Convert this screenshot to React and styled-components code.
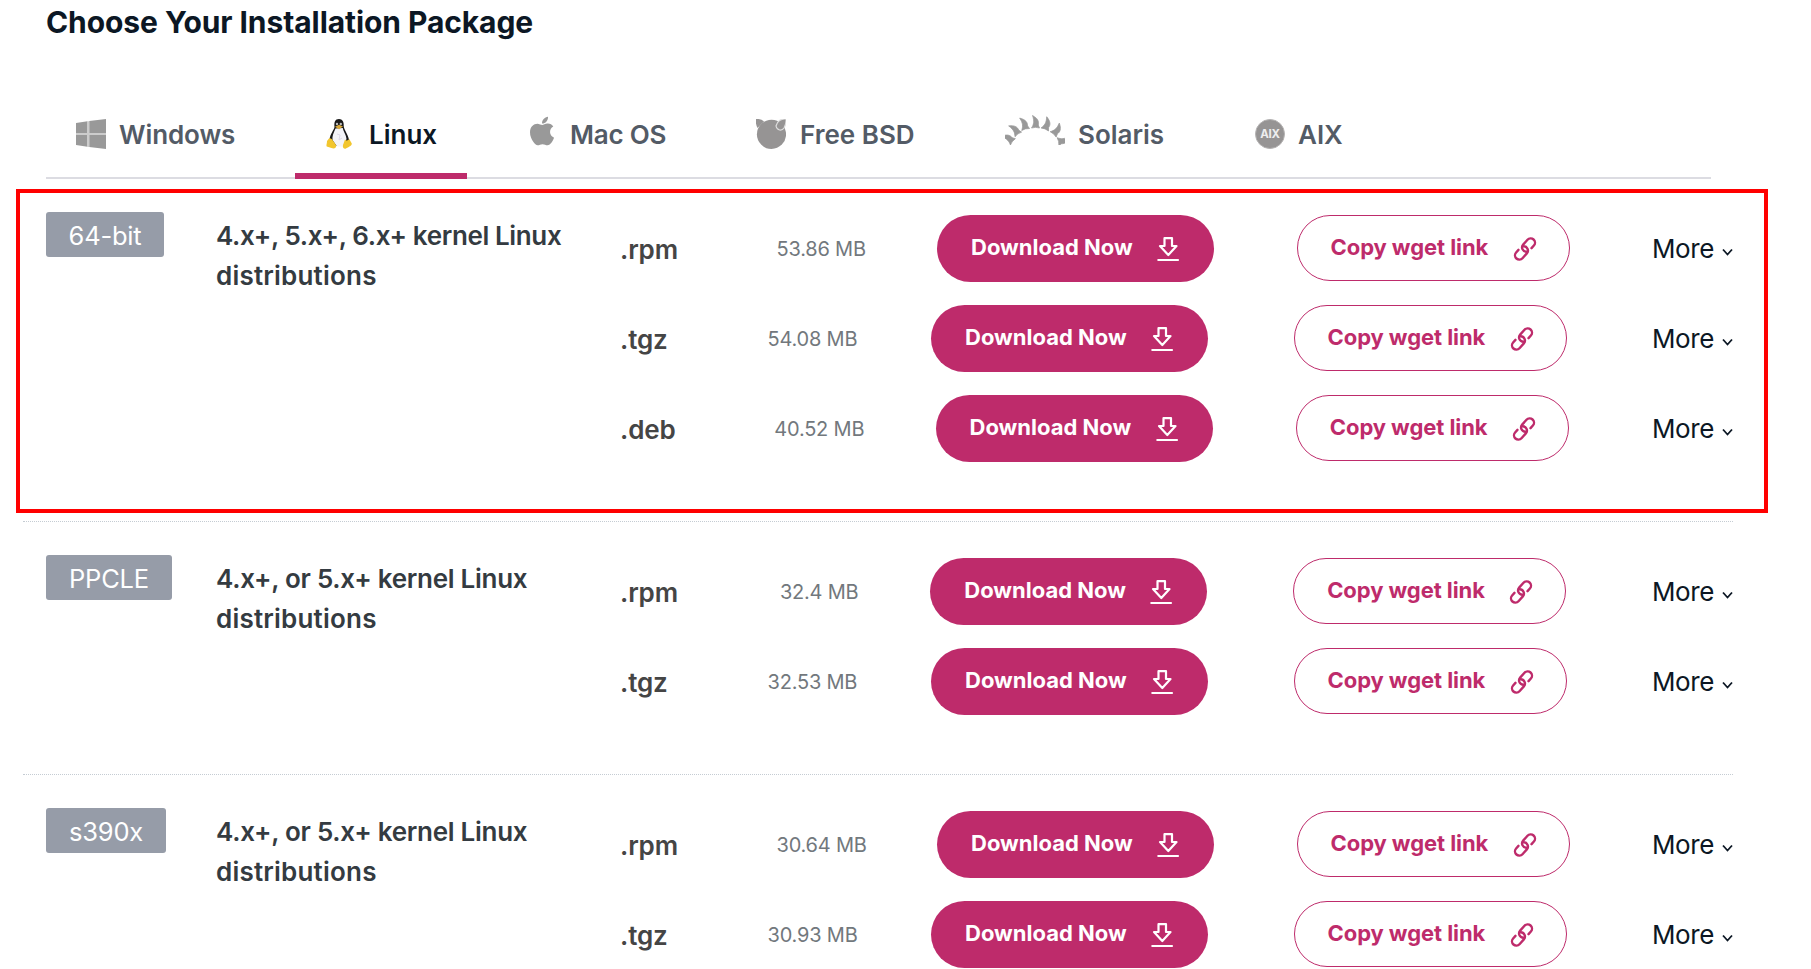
import React from "react";
import styled, { createGlobalStyle } from "styled-components";
import { FaApple } from "react-icons/fa";

const GlobalStyle = createGlobalStyle`
  * { box-sizing: border-box; }
  html, body { margin: 0; background: #fff; }
  body { font-family: Inter, "Liberation Sans", sans-serif; overflow: hidden; }
`;

const Page = styled.main`
  position: relative;
  width: 1811px;
  height: 969px;
  overflow: hidden;
  background: #fff;
`;

const Title = styled.h1`
  margin: 0;
  padding-left: 46px;
  height: 84px;
  font-size: 30px;
  line-height: 44px;
  font-weight: 700;
  letter-spacing: -0.08px;
  color: #0c1724;
  white-space: nowrap;
`;

const Tabs = styled.nav`
  display: flex;
  width: 1665px;
  height: 95px;
  margin-left: 46px;
  border-bottom: 2px solid #dcdce2;
`;

const Tab = styled.button`
  display: flex;
  align-items: flex-start;
  flex: none;
  width: ${(p) => p.$width}px;
  height: 95px;
  padding: 30px 0 0 30px;
  margin-right: ${(p) => p.$gap}px;
  border: 0;
  border-bottom: ${(p) => (p.$active ? "6px solid #be2b6b" : "0")};
  background: none;
  font: 600 26px/42px Inter, "Liberation Sans", sans-serif;
  letter-spacing: ${(p) => p.$track || 0}px;
  color: ${(p) => (p.$active ? "#0c1724" : "#535b66")};
  white-space: nowrap;
`;

const TabIcon = styled.span`
  display: flex;
  flex: none;
  margin: ${(p) => p.$top || 5}px ${(p) => p.$right || 13}px 0 ${(p) => p.$left || 0}px;
`;

const Group = styled.section`
  display: flex;
  width: 1710px;
  height: ${(p) => p.$height}px;
  margin-left: 23px;
  padding: 33px 0 0 23px;
  border-bottom: 1px dotted #c5ccd3;
`;

const BadgeCell = styled.div`
  width: 170px;
  flex: none;
`;

const Badge = styled.span`
  display: block;
  width: ${(p) => p.$width}px;
  height: 45px;
  border-radius: 3px;
  background: #969ca8;
  color: #fff;
  font-size: 25.5px;
  line-height: 48px;
  text-align: center;
  letter-spacing: -0.2px;
`;

const Description = styled.p`
  width: 404px;
  flex: none;
  margin: 4px 0 0;
  font-size: 26px;
  font-weight: 600;
  line-height: 40px;
  color: #343b41;
`;

const Line = styled.span`
  display: block;
  letter-spacing: ${(p) => p.$track}px;
`;

const Files = styled.div`
  width: 1113px;
  flex: none;
  padding-top: 3px;
`;

const FileRow = styled.div`
  display: flex;
  justify-content: space-between;
  height: 90px;
  white-space: nowrap;
`;

const Ext = styled.span`
  width: ${(p) => p.$width + 29}px;
  font-size: 26px;
  font-weight: 600;
  line-height: 70px;
  letter-spacing: -0.15px;
  color: #454545;
`;

const Size = styled.span`
  width: ${(p) => p.$width + 1.5}px;
  font-size: 20px;
  line-height: 68px;
  letter-spacing: -0.2px;
  color: #72787d;
`;

const Button = styled.button`
  display: flex;
  align-items: flex-start;
  flex: none;
  height: 67px;
  width: 277px;
  padding: 0 0 0 33px;
  border: 0;
  border-radius: 34px;
  background: #be2b6b;
  color: #fff;
  font: 700 22px/65px Inter, "Liberation Sans", sans-serif;
  letter-spacing: 0;
  white-space: nowrap;
  svg { flex: none; margin: 21px 0 0 auto; }
`;

const DownloadButton = styled(Button)`
  padding: 0 34px;
`;

const CopyButton = styled(Button)`
  width: 273px;
  height: 66px;
  margin: 0 12px 0 12px;
  padding: 0 32px 0 33px;
  border: 1px solid #be2b6b;
  background: #fff;
  color: #be2b6b;
  line-height: 62px;
  letter-spacing: -0.07px;
`;

const More = styled.span`
  display: flex;
  flex: none;
  width: 81px;
  font-size: 26px;
  line-height: 67px;
  letter-spacing: -0.4px;
  color: #0c1724;
  svg { margin: 33px 0 0 auto; }
`;

const Highlight = styled.div`
  position: absolute;
  left: 16px;
  top: 189px;
  width: 1752px;
  height: 324px;
  border: 4px solid #ff0000;
  pointer-events: none;
`;

const AixMark = styled.span`
  display: grid;
  place-items: center;
  width: 30px;
  height: 30px;
  border: 1px solid #b5b3b3;
  border-radius: 50%;
  background: #969494;
  color: #eee;
  font-size: 11.5px;
  font-weight: 700;
  line-height: 28px;
  letter-spacing: -0.2px;
`;

const WindowsIcon = () => (
  <svg width="30" height="30" viewBox="0 0 30 30" fill="#999">
    <path d="M0 4 11.5 2.3V14H0ZM13.2 2 30 0V14H13.2ZM0 16H11.5V27.8L0 26ZM13.2 16H30V30L13.2 28Z" />
    <path d="M11.5 2.3h1.7V28h-1.7zM0 14h30v2H0z" fill="#ccc" />
  </svg>
);

const TuxIcon = () => (
  <svg width="26" height="30" viewBox="0 0 26 30">
    <path d="M13 0C9 0 8 3 8.5 8 8 11 4 15 3.5 21L6 27H20L23 21C22 15 18 11 17.7 7 18 3 16.5 0 13 0Z" fill="#191919" />
    <path d="M9.5 9.5C7.5 14 6 17 6.5 21L11 27.5H17L20.5 20C20 15 17.5 13 16.8 9Z" fill="#f4f4f8" />
    <path d="m11 15 3 1-1 5 3-2" fill="none" stroke="#ddd9e7" />
    <circle cx="11" cy="5" r="1.2" fill="#bbb" />
    <circle cx="14.8" cy="5" r="1.2" fill="#bbb" />
    <path d="M9 7.7 13 5.8 17 7.5 13 10.3Z" fill="#d9a93a" />
    <path d="M3 19.5C5 18 7.5 22 10 26 11 29 8 30 5.5 29L.7 27.5C0 26 1 25 1 22ZM19 20.5C20 22 22.5 21.5 23.2 20L25.8 24.5C26 27 21.5 28.5 19.5 29.8 17.5 30 16.5 28.5 17 26Z" fill="#f2c62e" />
  </svg>
);

const BsdIcon = () => (
  <svg width="30" height="30" viewBox="0 0 30 30" fill="#969494">
    <circle cx="15.5" cy="15.3" r="14.6" />
    <path d="M0 0Q5-.5 8 2.6L1.5 9Q-.7 5 0 0Z" />
    <path d="M30 0C25-.6 21 2.5 20 7 21 12 26 12 28 9 30 5 30.5 3 30 0Z" stroke="#dedede" strokeWidth="1.2" />
  </svg>
);

const flames = [
  [7.5, 26.5, -52],
  [13, 19, -35],
  [20.5, 14, -14],
  [30.5, 12.5, 0],
  [40, 14, 22],
  [48.5, 19, 42],
  [53.5, 26.5, 78],
];
const SolarisIcon = () => (
  <svg width="60" height="30" viewBox="0 0 60 30" fill="#999" stroke="#999" strokeWidth=".7" strokeLinejoin="round">
    {flames.map(([x, y, angle]) => (
      <path
        key={x}
        transform={`translate(${x} ${y}) rotate(${angle})`}
        d="M-4 .5C-1.8-3-.9-6-3-12 2.5-9 3.6-6 2.8-2.5L4 .5Q0-.8-4 .5Z"
      />
    ))}
  </svg>
);

const DownloadIcon = () => (
  <svg width="23" height="26" viewBox="0 0 23 26" fill="none" stroke="#fff" strokeWidth="2.2" strokeLinejoin="round" strokeLinecap="round">
    <path d="M7.5 2.2H15V10H19.5L11.3 19 3 10H7.5ZM1.3 24H21" />
  </svg>
);

const LinkIcon = () => (
  <svg width="24" height="24" viewBox="0 0 24 24" fill="none" stroke="#be2b6b" strokeWidth="2.4" strokeLinecap="round">
    <g transform="translate(12 12) rotate(-48)">
      <path d="M5 4.3H8.5A4.3 4.3 0 0 0 8.5-4.3H2A4.3 4.3 0 0 0-1 3" />
      <path d="M-5-4.3H-8.5A4.3 4.3 0 0 0-8.5 4.3H-2A4.3 4.3 0 0 0 1-3" />
    </g>
  </svg>
);

const ChevronIcon = () => (
  <svg width="11" height="9" viewBox="0 0 11 9" fill="none" stroke="#0c1724" strokeWidth="1.8">
    <path d="M1 1.5 5.5 6.5 10 1.5" />
  </svg>
);

const tabs = [
  { name: "Windows", icon: <WindowsIcon />, width: 220, gap: 29, track: -0.1 },
  { name: "Linux", icon: <TuxIcon />, width: 172, gap: 30, left: 1, right: 17, active: true },
  { name: "Mac OS", icon: <FaApple size={30} color="#999" viewBox="0 20 384 470" />, width: 197, gap: 32, top: 2, right: 13, track: -0.2 },
  { name: "Free BSD", icon: <BsdIcon />, width: 218, gap: 31, right: 14 },
  { name: "Solaris", icon: <SolarisIcon />, width: 220, gap: 30, top: 1 },
  { name: "AIX", icon: <AixMark>AIX</AixMark>, width: 146, gap: 0 },
];

const groups = [
  {
    arch: "64-bit", badge: 118, height: 343, track: -0.37,
    kernels: "4.x+, 5.x+, 6.x+ kernel Linux",
    files: [[".rpm", 57, "53.86 MB", 88.5], [".tgz", 45, "54.08 MB", 88.5], [".deb", 54, "40.52 MB", 88.5]],
  },
  {
    arch: "PPCLE", badge: 126, height: 253, track: -0.28,
    kernels: "4.x+, or 5.x+ kernel Linux",
    files: [[".rpm", 57, "32.4 MB", 75], [".tgz", 45, "32.53 MB", 88.5]],
  },
  {
    arch: "s390x", badge: 120, height: 253, track: -0.28,
    kernels: "4.x+, or 5.x+ kernel Linux",
    files: [[".rpm", 57, "30.64 MB", 88.5], [".tgz", 45, "30.93 MB", 88.5]],
  },
];

export default function App() {
  return (
    <Page>
      <GlobalStyle />
      <Title>Choose Your Installation Package</Title>
      <Tabs>
        {tabs.map((t) => (
          <Tab key={t.name} $width={t.width} $gap={t.gap} $active={t.active} $track={t.track}>
            <TabIcon $top={t.top} $right={t.right} $left={t.left}>{t.icon}</TabIcon>
            {t.name}
          </Tab>
        ))}
      </Tabs>
      {groups.map((g) => (
        <Group key={g.arch} $height={g.height}>
          <BadgeCell>
            <Badge $width={g.badge}>{g.arch}</Badge>
          </BadgeCell>
          <Description>
            <Line $track={g.track}>{g.kernels}</Line>
            <Line $track={0.2}>distributions</Line>
          </Description>
          <Files>
            {g.files.map(([ext, extWidth, size, sizeWidth]) => (
              <FileRow key={ext}>
                <Ext $width={extWidth}>{ext}</Ext>
                <Size $width={sizeWidth}>{size}</Size>
                <DownloadButton>Download Now<DownloadIcon /></DownloadButton>
                <CopyButton>Copy wget link<LinkIcon /></CopyButton>
                <More>More<ChevronIcon /></More>
              </FileRow>
            ))}
          </Files>
        </Group>
      ))}
      <Highlight />
    </Page>
  );
}
